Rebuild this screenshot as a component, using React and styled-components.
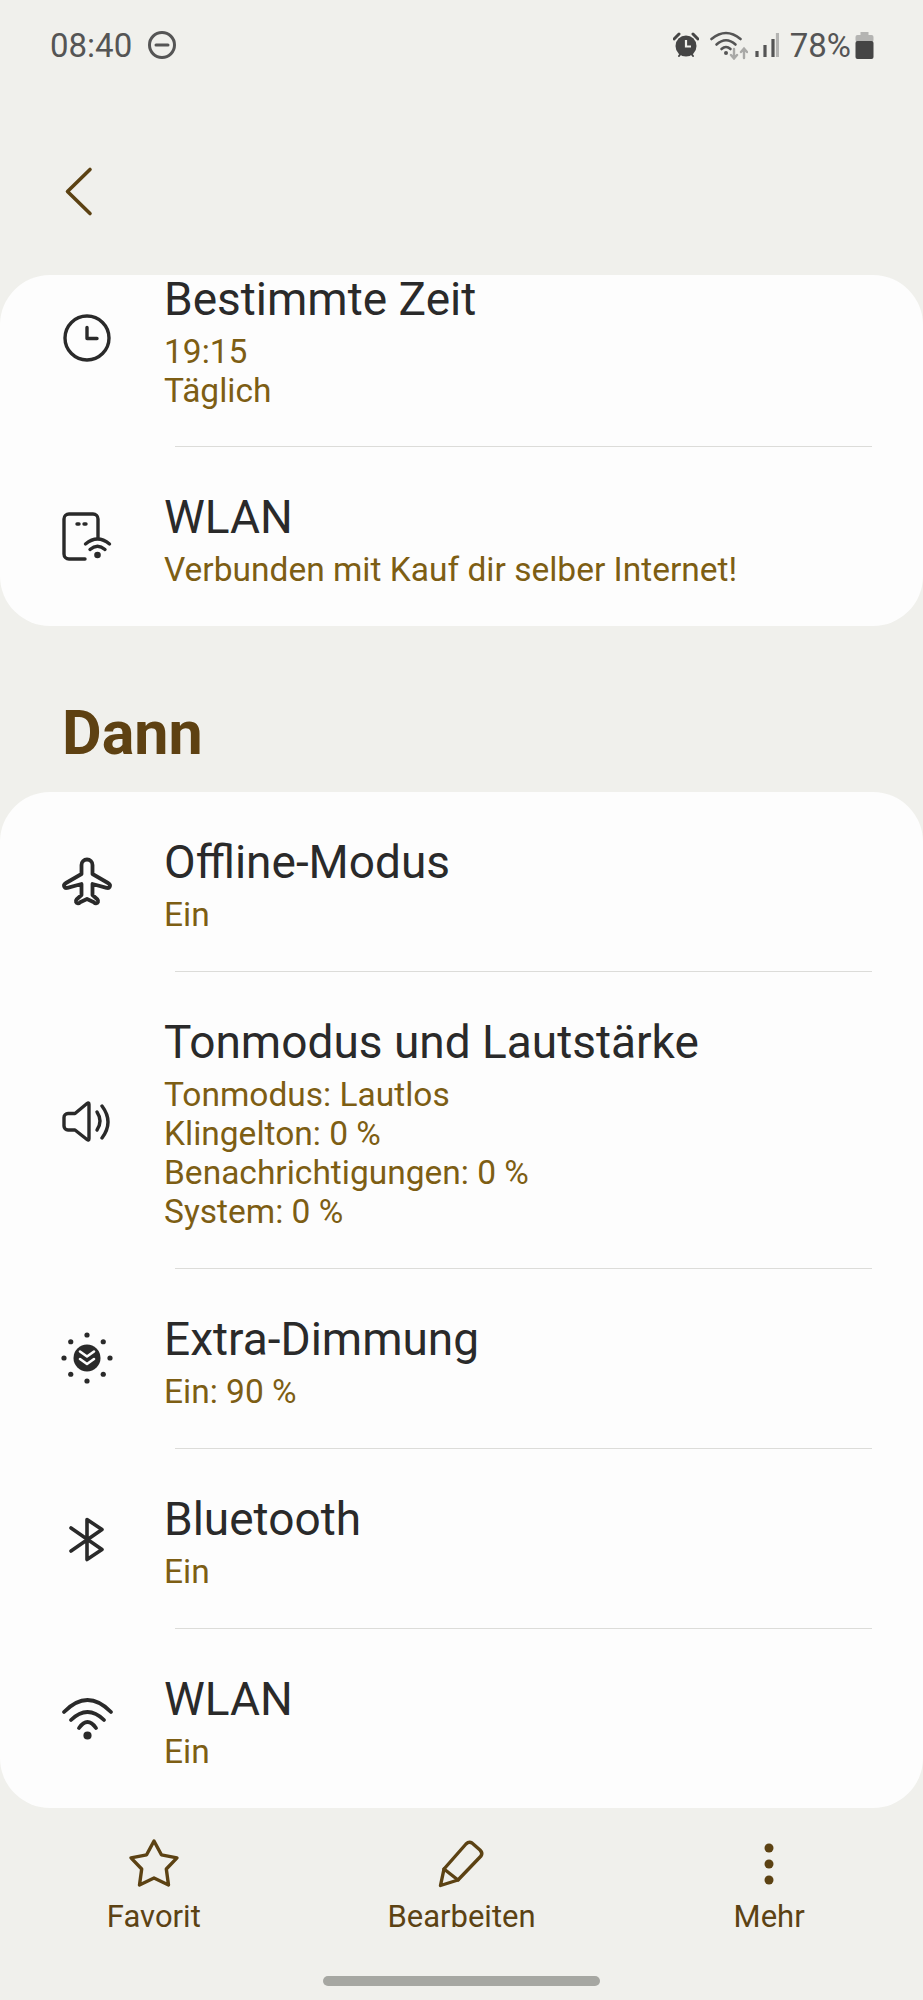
import styled, { createGlobalStyle } from 'styled-components';

const dark = '#2a2a2a';
const brown = '#5c4213';

const GlobalStyle = createGlobalStyle`
  html, body {
    margin: 0;
    padding: 0;
    background: #f0f0ec;
  }
  * {
    box-sizing: border-box;
  }
`;

const Page = styled.div`
  width: 923px;
  height: 2000px;
  display: flex;
  flex-direction: column;
  background: #f0f0ec;
  font-family: Roboto, 'Noto Sans', sans-serif;
  overflow: hidden;
`;

const StatusBar = styled.div`
  height: 90px;
  display: flex;
  align-items: center;
  justify-content: space-between;
  padding: 0 49px 0 50px;
  color: #555;
  font-size: 33px;
`;

const StatusGroup = styled.div`
  display: flex;
  align-items: center;
`;

const Percent = styled.span`
  margin-left: 11px;
`;

const Header = styled.div`
  height: 185px;
  padding: 76px 0 0 59px;
`;

const Card = styled.div`
  background: #fdfdfd;
  border-radius: 50px;
`;

/* the first row of the top card is scrolled up against the card edge */
const Row = styled.div`
  display: flex;
  align-items: center;
  padding: 36px 40px ${(props) => (props.$scrolled ? '36px' : '37px')} 59px;
  gap: 49px;
  margin-top: ${(props) => (props.$scrolled ? '-46px' : '0')};
`;

const IconBox = styled.div`
  width: 56px;
  height: 56px;
  flex: none;
  color: ${dark};
`;

const TextCol = styled.div`
  display: flex;
  flex-direction: column;
  gap: 9px;
  padding-top: 10px;
`;

const Title = styled.div`
  font-size: 46px;
  line-height: 48px;
  color: ${dark};
`;

const Sub = styled.div`
  font-size: 33.5px;
  line-height: 39px;
  color: #7d5e14;
`;

const Divider = styled.div`
  height: 1px;
  margin: 0 51px 0 175px;
  background: #dcdcd9;
`;

const SectionTitle = styled.h2`
  height: 166px;
  margin: 0;
  padding: 47px 0 0 62px;
  display: flex;
  align-items: center;
  font-size: 61px;
  font-weight: 700;
  color: #5e4112;
`;

const BottomBar = styled.div`
  display: grid;
  grid-template-columns: repeat(3, 1fr);
  padding-top: 28px;
`;

const Action = styled.div`
  display: flex;
  flex-direction: column;
  align-items: center;
  gap: 8px;
  color: ${brown};
  font-size: 31px;
  line-height: 34px;
`;

const HomeWrap = styled.div`
  display: flex;
  justify-content: center;
  padding-top: 42px;
`;

const HomeBar = styled.div`
  width: 277px;
  height: 10px;
  border-radius: 5px;
  background: #a6a7a2;
`;

const Svg = ({ children, size = 56, fill = 'none', strokeWidth = 3.4 }) => (
  <svg
    width={size}
    height={size}
    viewBox={`0 0 ${size} ${size}`}
    fill={fill}
    stroke="currentColor"
    strokeWidth={strokeWidth}
    strokeLinecap="round"
    strokeLinejoin="round"
    style={{ display: 'block' }}
  >
    {children}
  </svg>
);

const ClockIcon = () => (
  <Svg>
    <circle cx="28" cy="28" r="22" />
    <path d="M28 17.500V28.500H38" />
  </Svg>
);

const TabletWifiIcon = () => (
  <Svg>
    <path d="M39 30V11a5 5 0 0 0-5-5H10a5 5 0 0 0-5 5V46a5 5 0 0 0 5 5H26" />
    <path d="M18 16h2M25 16h2" />
    <path d="M26.500 36Q38.500 26 50.500 36" />
    <path d="M31 41.500Q38.500 35 46 41.500" />
    <circle cx="38.500" cy="47" r="1.600" fill="currentColor" />
  </Svg>
);

const PlaneIcon = () => (
  <Svg strokeWidth={3.8}>
    <path d="M22.500 12a5.500 5.500 0 0 1 11 0v9l15.500 9c2 1.200 2.400 2.600 1.600 4-.6 1-1.800 1.200-3 .8L33.500 31v11l5 4.500c1.500 1.600.4 4-1.600 3.800-.8 0-1.400-.4-2-1L28 46l-6.900 3.300c-.6.6-1.200 1-2 1-2 .2-3.100-2.200-1.600-3.800L22.500 42V31L8.400 34.800c-1.200.4-2.400.2-3-.8-.8-1.400-.4-2.800 1.600-4l15.500-9z" />
  </Svg>
);

const SpeakerIcon = () => (
  <Svg>
    <path d="M16 21.500L28 11.500q2-1.500 2 1V46.500q0 2.500-2 1L16 38H9a4 4 0 0 1-4-4V25.500a4 4 0 0 1 4-4z" />
    <path d="M38 20Q44 29 38 38" />
    <path d="M43 14Q55 30 43 46" />
  </Svg>
);

const DIM_DOTS = [0, 45, 90, 135, 180, 225, 270, 315];

const DimIcon = () => (
  <Svg>
    {DIM_DOTS.map((deg) => (
      <circle
        key={deg}
        cx={28 + 23 * Math.cos((deg * Math.PI) / 180)}
        cy={28 + 23 * Math.sin((deg * Math.PI) / 180)}
        r="2.600"
        fill="currentColor"
        stroke="none"
      />
    ))}
    <circle cx="28" cy="28" r="13.500" fill="currentColor" stroke="none" />
    <path d="M21 21.500l7 5 7-5M21 29l7 5 7-5" stroke="#fdfdfd" strokeWidth="2.600" />
  </Svg>
);

const BluetoothIcon = () => (
  <Svg strokeWidth={3.6}>
    <path d="M12 18L43 39.500L28 49.500V9.500L43 19.500L12 41" />
  </Svg>
);

const WifiIcon = () => (
  <Svg strokeWidth={3.8}>
    <path d="M5 22Q28.500-2 52 22" />
    <path d="M12 30Q28.500 14 45 30" />
    <path d="M20 38Q28.500 26 37 38" />
    <circle cx="28.500" cy="45.500" r="2.200" fill="currentColor" />
  </Svg>
);

const StarIcon = () => (
  <Svg>
    <path d="M28 5L35.400 18.800 51 21.800 40.300 33 42.500 49 28 42 13.500 49 15.700 33 5 21.800 20.600 18.800z" />
  </Svg>
);

const PencilIcon = () => (
  <Svg>
    <path d="M7.500 49.500L11 33L33 8q3-3 6-1l8 7q3 3 1 6L25 44z" />
    <path d="M11 33L25 44" />
  </Svg>
);

const DotsIcon = () => (
  <Svg>
    <g fill="currentColor" stroke="none">
      <circle cx="28" cy="12" r="4.500" />
      <circle cx="28" cy="28" r="4.500" />
      <circle cx="28" cy="44" r="4.500" />
    </g>
  </Svg>
);

const BackIcon = () => (
  <svg width="40" height="52" viewBox="0 0 40 52" fill="none" stroke={brown} strokeWidth="3.600" strokeLinecap="round" strokeLinejoin="round" style={{ display: 'block' }}>
    <path d="M31 3.500L8.500 25.500L31 47.500" />
  </svg>
);

const StatusSvg = styled.svg`
  display: block;
  margin-left: ${(props) => props.$left || 0}px;
`;

const DndIcon = () => (
  <StatusSvg $left={15} width="30" height="30" viewBox="0 0 30 30" fill="none" stroke="#555" strokeWidth="3" strokeLinecap="round">
    <circle cx="15" cy="15" r="12.500" />
    <path d="M9 15H21" />
  </StatusSvg>
);

const AlarmIcon = () => (
  <StatusSvg width="26" height="26" viewBox="0 0 26 26">
    <circle cx="13" cy="14" r="10.500" fill="#454545" />
    <path d="M13 8V14.500H18" fill="none" stroke="#f0f0ec" strokeWidth="2.200" />
    <path d="M1 7L6 2M25 7L20 2" stroke="#454545" strokeWidth="3" strokeLinecap="round" />
    <path d="M6 24L7.500 22M20 24L18.500 22" stroke="#454545" strokeWidth="2" strokeLinecap="round" />
  </StatusSvg>
);

const StatusWifiIcon = () => (
  <StatusSvg $left={11} width="38" height="30" viewBox="0 0 38 30" fill="none" strokeLinecap="round">
    <path d="M1.500 9Q16-3 30.500 9" stroke="#555" strokeWidth="2.600" />
    <path d="M6.500 14.500Q16 6 25.500 14.500" stroke="#555" strokeWidth="2.600" />
    <path d="M11.500 19Q16 15 20.500 19" stroke="#555" strokeWidth="2.600" />
    <circle cx="16" cy="23" r="2" fill="#555" />
    <path d="M24 19V28M21 25l3 3.500 3-3.500" stroke="#a9a9a7" strokeWidth="2.400" />
    <path d="M34 28V19M31 22l3-3.500 3 3.500" stroke="#a9a9a7" strokeWidth="2.400" />
  </StatusSvg>
);

const SignalIcon = () => (
  <StatusSvg $left={7} width="24" height="26" viewBox="0 0 24 26" fill="none" strokeWidth="3.200">
    <path d="M2 25V19M10 25V13M18 25V7" stroke="#555" />
    <path d="M22.500 25V1" stroke="#b4b4b2" />
  </StatusSvg>
);

const BatteryIcon = () => (
  <StatusSvg $left={4} width="19" height="27" viewBox="0 0 19 27">
    <rect x="5.500" y="0" width="8" height="3" fill="#b4b4b2" />
    <rect x="0.500" y="3" width="18" height="7" rx="2" fill="#b4b4b2" />
    <rect x="0.500" y="9" width="18" height="18" rx="2" fill="#454545" />
  </StatusSvg>
);

const TOP_ROWS = [
  { id: 'time', icon: <ClockIcon />, title: 'Bestimmte Zeit', lines: ['19:15', 'Täglich'], scrolled: true },
  { id: 'wlan-if', icon: <TabletWifiIcon />, title: 'WLAN', lines: ['Verbunden mit Kauf dir selber Internet!'] },
];

const ACTION_ROWS = [
  { id: 'offline', icon: <PlaneIcon />, title: 'Offline-Modus', lines: ['Ein'] },
  {
    id: 'sound',
    icon: <SpeakerIcon />,
    title: 'Tonmodus und Lautstärke',
    lines: ['Tonmodus: Lautlos', 'Klingelton: 0 %', 'Benachrichtigungen: 0 %', 'System: 0 %'],
  },
  { id: 'dim', icon: <DimIcon />, title: 'Extra-Dimmung', lines: ['Ein: 90 %'] },
  { id: 'bt', icon: <BluetoothIcon />, title: 'Bluetooth', lines: ['Ein'] },
  { id: 'wlan', icon: <WifiIcon />, title: 'WLAN', lines: ['Ein'] },
];

const RowList = ({ rows }) => (
  <Card>
    {rows.map((row, index) => (
      <div key={row.id}>
        {index > 0 && <Divider />}
        <Row $scrolled={row.scrolled}>
          <IconBox>{row.icon}</IconBox>
          <TextCol>
            <Title>{row.title}</Title>
            <div>
              {row.lines.map((line) => (
                <Sub key={line}>{line}</Sub>
              ))}
            </div>
          </TextCol>
        </Row>
      </div>
    ))}
  </Card>
);

const App = () => (
  <Page>
    <GlobalStyle />
    <StatusBar>
      <StatusGroup>
        <span>08:40</span>
        <DndIcon />
      </StatusGroup>
      <StatusGroup>
        <AlarmIcon />
        <StatusWifiIcon />
        <SignalIcon />
        <Percent>78%</Percent>
        <BatteryIcon />
      </StatusGroup>
    </StatusBar>
    <Header>
      <BackIcon />
    </Header>
    <RowList rows={TOP_ROWS} />
    <SectionTitle>Dann</SectionTitle>
    <RowList rows={ACTION_ROWS} />
    <BottomBar>
      <Action>
        <StarIcon />
        Favorit
      </Action>
      <Action>
        <PencilIcon />
        Bearbeiten
      </Action>
      <Action>
        <DotsIcon />
        Mehr
      </Action>
    </BottomBar>
    <HomeWrap>
      <HomeBar />
    </HomeWrap>
  </Page>
);

export default App;
